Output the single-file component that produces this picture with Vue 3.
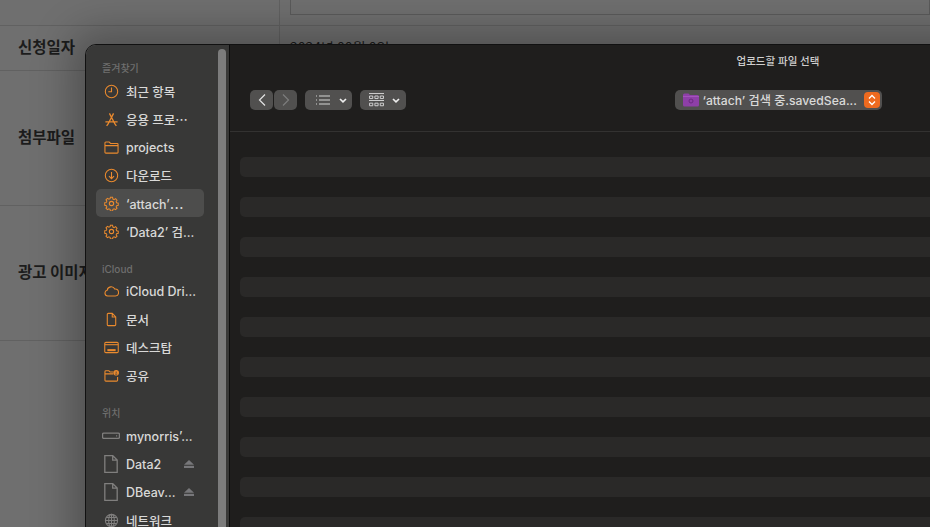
<script setup>
const pageRows = [
  { label: '', height: 26, value: '' },
  { label: '신청일자', height: 45, value: '2024년 00월 0일' },
  { label: '첨부파일', height: 135, value: '' },
  { label: '광고 이미지', height: 135, value: '' },
]

const sections = [
  {
    title: '즐겨찾기',
    items: [
      { name: '최근 항목', icon: 'clock' },
      { name: '응용 프로⋯', icon: 'apps' },
      { name: 'projects', icon: 'folder' },
      { name: '다운로드', icon: 'download' },
      { name: '‘attach’⋯', icon: 'gear', active: true },
      { name: '‘Data2’ 검...', icon: 'gear' },
    ],
  },
  {
    title: 'iCloud',
    items: [
      { name: 'iCloud Dri...', icon: 'cloud' },
      { name: '문서', icon: 'doc' },
      { name: '데스크탑', icon: 'desktop' },
      { name: '공유', icon: 'shared' },
    ],
  },
  {
    title: '위치',
    items: [
      { name: 'mynorris’...', icon: 'disk', grey: true },
      { name: 'Data2', icon: 'file', grey: true, eject: true },
      { name: 'DBeav...', icon: 'file', grey: true, eject: true },
      { name: '네트워크', icon: 'globe', grey: true },
    ],
  },
]

const stripes = Array.from({ length: 10 }, (_, i) => i)
</script>

<template>
  <div class="page">
    <div
      v-for="(row, i) in pageRows"
      :key="i"
      class="page-row"
      :style="{ height: row.height + 'px' }"
    >
      <div class="page-label">{{ row.label }}</div>
      <div class="page-value">
        <div v-if="i === 0" class="page-input"></div>
        <span v-else>{{ row.value }}</span>
      </div>
    </div>

    <div class="dialog">
      <aside class="sidebar">
        <div class="scrollbar"></div>
        <section v-for="section in sections" :key="section.title" class="section">
          <h3>{{ section.title }}</h3>
          <div
            v-for="item in section.items"
            :key="item.name"
            class="item"
            :class="{ active: item.active, grey: item.grey }"
          >
            <svg
              class="item-icon"
              :class="{ large: item.icon === 'file' || item.icon === 'disk' }"
              viewBox="0 0 16 16"
              fill="none"
              stroke="currentColor"
              stroke-width="1.15"
            >
              <template v-if="item.icon === 'clock'">
                <circle cx="8" cy="8" r="6.6" />
                <path d="M8 3.800v4.500H4.600" />
              </template>
              <template v-else-if="item.icon === 'apps'">
                <path d="M5.800 1.500l6 11.500M10.200 1.500L4.200 13M1.500 10.500h13M2.800 14.800l1.400-1.800M13.200 14.800l-1.400-1.800" stroke-width="1.400" />
              </template>
              <template v-else-if="item.icon === 'folder'">
                <path d="M1 13V3.200a1 1 0 0 1 1-1h3.500L7 3.700h7a1 1 0 0 1 1 1V13a1 1 0 0 1-1 1H2a1 1 0 0 1-1-1zM1 6h14" />
              </template>
              <template v-else-if="item.icon === 'download'">
                <circle cx="8" cy="8" r="6.600" />
                <path d="M8 4.200v7M5.300 8.700L8 11.400l2.700-2.700" />
              </template>
              <template v-else-if="item.icon === 'gear'">
                <circle cx="8" cy="8" r="2.300" />
                <path d="M6.800 1.300h2.400l.4 1.900 1.300.6 1.700-1 1.600 1.700-1 1.500.6 1.400 1.800.4v2.400l-1.800.4-.6 1.400 1 1.500-1.600 1.700-1.700-1-1.300.6-.4 1.900H6.800l-.4-1.900-1.300-.6-1.700 1-1.600-1.700 1-1.500-.6-1.400-1.800-.4V7.400l1.800-.4.6-1.400-1-1.500 1.600-1.700 1.700 1 1.300-.6z" transform="translate(0.400 0.200) scale(0.95)" />
              </template>
              <template v-else-if="item.icon === 'cloud'">
                <path d="M3.900 12.800a3.100 3.100 0 0 1-.5-6.100A4.300 4.300 0 0 1 11.500 5.400a3.700 3.700 0 0 1 .6 7.400z" />
              </template>
              <template v-else-if="item.icon === 'doc'">
                <path d="M3.500 2.500a1 1 0 0 1 1-1h4.300l3.700 3.800v8.200a1 1 0 0 1-1 1h-7a1 1 0 0 1-1-1zM8.800 1.500v3.800h3.700" />
              </template>
              <template v-else-if="item.icon === 'desktop'">
                <rect x="0.800" y="2.500" width="14.400" height="11" rx="1.200" />
                <path d="M.8 5h14.400" />
                <path d="M3.600 10.800h8.800" stroke-width="2.200" />
              </template>
              <template v-else-if="item.icon === 'shared'">
                <path d="M1 13V4a1 1 0 0 1 1-1h3.200l1.300 1.300H10M1 6.300h9M14.500 9.500V13a1 1 0 0 1-1 1H2a1 1 0 0 1-1-1" />
                <circle cx="13" cy="5" r="3" fill="currentColor" stroke="none" />
                <path d="M13 3.800v1.400M11.900 6.500h2.200" stroke="#383837" stroke-width="0.900" />
              </template>
              <template v-else-if="item.icon === 'disk'">
                <rect x="0.500" y="5.500" width="15" height="4.600" rx="1" />
                <path d="M12.500 7.800h1" />
              </template>
              <template v-else-if="item.icon === 'file'">
                <path d="M2.500 .5h7l4 4v11h-11zM9.500 .5v4h4" />
              </template>
              <template v-else-if="item.icon === 'globe'">
                <circle cx="8" cy="8" r="6.500" />
                <ellipse cx="8" cy="8" rx="3" ry="6.500" />
                <path d="M1.500 8h13M2.500 4.800h11M2.500 11.200h11M8 1.500v13" />
              </template>
            </svg>
            <span class="item-name">{{ item.name }}</span>
            <svg v-if="item.eject" class="eject" viewBox="0 0 10 8" fill="#77777a">
              <path d="M5 0l5 4.800H0z" />
              <rect y="5.800" width="10" height="2.200" />
            </svg>
          </div>
        </section>
      </aside>

      <main class="content">
        <div class="title">업로드할 파일 선택</div>
        <div class="toolbar">
          <div class="tool-left">
            <div class="nav">
              <button class="btn nav-btn">
                <svg viewBox="0 0 10 14" width="10" height="14" fill="none" stroke="#e3e3e3" stroke-width="1.200"><path d="M8 1.500L2.500 7 8 12.500" /></svg>
              </button>
              <button class="btn nav-btn">
                <svg viewBox="0 0 10 14" width="10" height="14" fill="none" stroke="#7d7d7d" stroke-width="1.200"><path d="M2 1.500L7.500 7 2 12.500" /></svg>
              </button>
            </div>
            <button class="btn view-btn list">
              <svg viewBox="0 0 14 10" width="14" height="10" fill="none" stroke="#d4d4d4" stroke-width="1"><path d="M0 1h1M0 5h1M0 9h1M3 1h11M3 5h11M3 9h11" /></svg>
              <svg class="chev" viewBox="0 0 8 5" width="8" height="5" fill="none" stroke="#eeeeee" stroke-width="1.700"><path d="M1 1l3 2.800L7 1" /></svg>
            </button>
            <button class="btn view-btn grid">
              <svg viewBox="0 0 14 14" width="15" height="15" fill="none" stroke="#d4d4d4" stroke-width="0.900">
                <path d="M0 .5h14M0 7h14" />
                <path d="M.5 2.800h3v2.400h-3zM5.500 2.800h3v2.400h-3zM10.500 2.800h3v2.400h-3zM.5 9.500h3v2.400h-3zM5.500 9.500h3v2.400h-3zM10.500 9.500h3v2.400h-3z" />
              </svg>
              <svg class="chev" viewBox="0 0 8 5" width="8" height="5" fill="none" stroke="#eeeeee" stroke-width="1.700"><path d="M1 1l3 2.800L7 1" /></svg>
            </button>
          </div>
          <div class="popup">
            <svg class="popup-folder" viewBox="0 0 16 14" width="16" height="14">
              <path d="M0 2a1.500 1.500 0 0 1 1.500-1.500h4L7 2h7.500A1.500 1.500 0 0 1 16 3.500V12a1.500 1.500 0 0 1-1.500 1.500h-13A1.500 1.500 0 0 1 0 12z" fill="#8e3fa8" />
              <path d="M0 3.500h16" stroke="#a858c2" stroke-width="0.800" />
              <circle cx="8" cy="8" r="2" fill="none" stroke="#6b2a80" stroke-width="1" />
            </svg>
            <span class="popup-text">‘attach’ 검색 중.savedSea...</span>
            <span class="popup-arrows">
              <svg viewBox="0 0 8 12" width="8" height="12" fill="none" stroke="#fff" stroke-width="1.300"><path d="M1 4.500L4 1.500l3 3M1 7.500l3 3 3-3" /></svg>
            </span>
          </div>
          <div></div>
        </div>
        <div class="stripes">
          <div v-for="s in stripes" :key="s" class="stripe"></div>
        </div>
      </main>
    </div>
  </div>
</template>

<style>
html,
body {
  margin: 0;
  height: 100%;
  overflow: hidden;
  background: #6f6f6f;
}
</style>

<style scoped>
.page {
  position: relative;
  width: 930px;
  height: 527px;
  overflow: hidden;
  background: #6f6f6f;
  font-family: "Noto Sans CJK KR", "Liberation Sans", sans-serif;
}

.page-row {
  display: grid;
  grid-template-columns: 279px 1fr;
  box-sizing: border-box;
  border-bottom: 1px solid #616161;
}

.page-label {
  display: flex;
  align-items: center;
  padding: 0 0 5px 18px;
  font-size: 15.5px;
  font-weight: 700;
  color: #1c1c1c;
  white-space: nowrap;
}

.page-value {
  border-left: 1px solid #616161;
  padding: 0 0 3px 10px;
  display: flex;
  align-items: center;
  font-size: 14px;
  color: #1c1c1c;
}

.page-input {
  align-self: flex-start;
  width: 100%;
  height: 15px;
  box-sizing: border-box;
  border: 1px solid #5a5a5a;
  border-top: 0;
}

.dialog {
  position: absolute;
  left: 86px;
  top: 45px;
  width: 1240px;
  height: 600px;
  display: flex;
  border-radius: 10px 10px 0 0;
  outline: 1px solid #111;
  box-shadow: 0 0 40px 14px rgba(0, 0, 0, 0.28);
  overflow: hidden;
  font-family: "Inter", "Noto Sans CJK KR", "Liberation Sans", sans-serif;
}

.sidebar {
  position: relative;
  flex: none;
  width: 144px;
  box-sizing: border-box;
  padding: 0 10px;
  background: #383837;
  border-right: 1px solid #0c0c0c;
}

.scrollbar {
  position: absolute;
  top: 4px;
  right: 3px;
  bottom: 0;
  width: 8px;
  border-radius: 4px;
  background: #7c7c7c;
}

.section h3 {
  margin: 0;
  padding: 16px 0 0 6px;
  height: 14px;
  line-height: 14px;
  font-size: 10px;
  font-weight: 500;
  color: #6f6f6e;
}

.section:nth-of-type(2) h3 {
  padding-top: 17px;
}

.section:nth-of-type(3) h3 {
  padding-top: 17px;
}

.section h3 + .item {
  margin-top: 2px;
}

.section:nth-of-type(2) h3 + .item {
  margin-top: 1px;
}

.section:nth-of-type(3) h3 + .item {
  margin-top: 2px;
}

.item {
  display: flex;
  align-items: center;
  width: 108px;
  height: 28px;
  box-sizing: border-box;
  padding-left: 8px;
  border-radius: 5px;
  font-size: 12.5px;
  font-weight: 500;
  color: #d9d9d8;
  white-space: nowrap;
}

.item.active {
  background: #4d4d4c;
}

.item-icon {
  flex: none;
  width: 15px;
  height: 15px;
  margin-right: 7px;
  color: #ea8a2e;
}

.item-icon.large {
  width: 18px;
  height: 18px;
  margin: 0 6px 0 -2px;
}

.item.grey .item-icon {
  color: #807f7e;
}

.item-name {
  flex: 1;
}

.eject {
  flex: none;
  width: 10px;
  height: 8px;
  margin-right: 10px;
}

.content {
  flex: 1;
  min-width: 0;
  background: #1f1e1d;
}

.title {
  padding-top: 9px;
  height: 15px;
  line-height: 15px;
  text-align: center;
  font-size: 10.5px;
  font-weight: 500;
  color: #cfcfce;
}

.toolbar {
  display: grid;
  grid-template-columns: 1fr auto 1fr;
  align-items: start;
  height: 20px;
  margin-top: 21px;
  padding: 0 20px 21px;
  border-bottom: 1px solid #333231;
}

.tool-left {
  display: flex;
  gap: 8px;
}

.nav {
  display: flex;
  gap: 1px;
}

.btn {
  display: flex;
  align-items: center;
  justify-content: center;
  height: 20px;
  padding: 0;
  border: 0;
  border-radius: 5px;
  background: #51504f;
}

.nav-btn {
  width: 23px;
}

.view-btn {
  justify-content: flex-start;
  padding-left: 11px;
  box-sizing: border-box;
}

.view-btn.list {
  width: 47px;
}

.view-btn.list .chev {
  margin-left: 9px;
}

.view-btn.grid {
  width: 46px;
  padding-left: 9px;
}

.view-btn.grid .chev {
  margin-left: 8px;
}

.popup {
  display: flex;
  align-items: center;
  width: 207px;
  height: 20px;
  box-sizing: border-box;
  padding: 0 2px 0 8px;
  border-radius: 5px;
  background: #51504f;
}

.popup-folder {
  flex: none;
  margin-right: 4px;
}

.popup-text {
  flex: 1;
  font-size: 12.2px;
  font-weight: 500;
  color: #d9d9d8;
  white-space: nowrap;
  overflow: hidden;
}

.popup-arrows {
  flex: none;
  display: flex;
  align-items: center;
  justify-content: center;
  width: 16px;
  height: 16px;
  border-radius: 4px;
  background: #ee6a1f;
}

.stripes {
  display: flex;
  flex-direction: column;
  gap: 20px;
  padding: 25px 0 0 10px;
}

.stripe {
  height: 20px;
  border-radius: 5px;
  background: #2a2928;
}
</style>
